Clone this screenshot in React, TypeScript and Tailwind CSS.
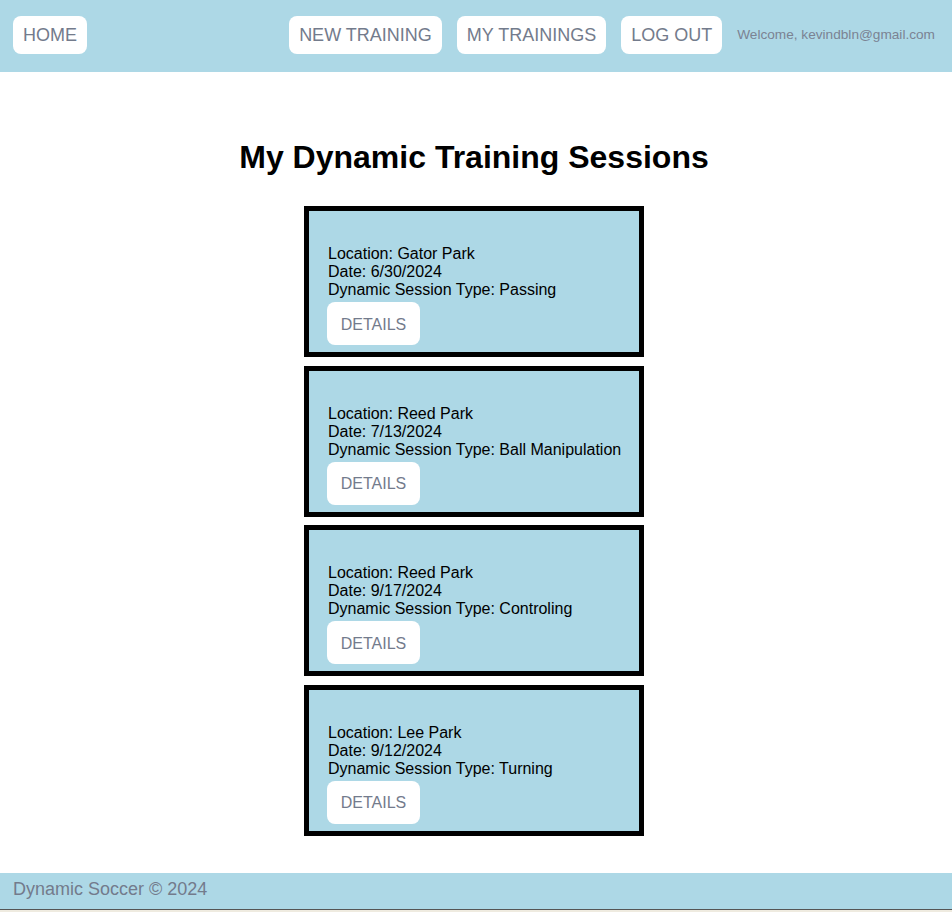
import React from "react";

const sessions = [
  { location: "Gator Park", date: "6/30/2024", type: "Passing" },
  { location: "Reed Park", date: "7/13/2024", type: "Ball Manipulation" },
  { location: "Reed Park", date: "9/17/2024", type: "Controling" },
  { location: "Lee Park", date: "9/12/2024", type: "Turning" },
];

function NavButton({ children }: { children: React.ReactNode }) {
  return (
    <button className="h-[38px] px-[10px] bg-white rounded-[8px] text-[18px] text-[#737b8c] leading-none flex items-center">
      {children}
    </button>
  );
}

export default function App() {
  return (
    <div className="min-h-[912px] bg-white flex flex-col" style={{ fontFamily: '"Liberation Sans", Arial, sans-serif' }}>
      <header className="h-[72px] bg-[#add8e6] flex items-start pt-[16px] pl-[13px] pr-[17px]">
        <NavButton>HOME</NavButton>
        <div className="flex-1" />
        <div className="flex items-center gap-[15px]">
          <NavButton>NEW TRAINING</NavButton>
          <NavButton>MY TRAININGS</NavButton>
          <NavButton>LOG OUT</NavButton>
          <span className="text-[13.65px] text-[#7b8393]">Welcome, kevindbln@gmail.com</span>
        </div>
      </header>
      <main className="flex flex-col items-center pt-[67px] pb-[37px] pr-[4px]">
        <h1 className="text-[32px] font-bold text-black leading-[37px] mb-[30px]">
          My Dynamic Training Sessions
        </h1>
        <div className="flex flex-col gap-[8.67px]">
          {sessions.map((s, i) => (
            <div
              key={i}
              className="w-[340px] h-[151px] border-[5px] border-black bg-[#add8e6] pl-[18px] pt-[34px] text-[16px] text-black leading-[18px]"
            >
              <div className="pl-[1px]">Location: {s.location}</div>
              <div className="pl-[1px]">Date: {s.date}</div>
              <div className="pl-[1px]">Dynamic Session Type: {s.type}</div>
              <button className="mt-[3px] h-[43px] w-[93px] pt-[2px] bg-white rounded-[8px] text-[16px] text-[#737b8c] leading-none">
                DETAILS
              </button>
            </div>
          ))}
        </div>
      </main>
      <footer className="h-[37px] bg-[#add8e6] border-b border-[#555] pl-[13px] pt-[6px] leading-[21px] text-[18px] text-[#737b8c]">
        Dynamic Soccer © 2024
      </footer>
      <div className="flex-1 bg-[#efebe0]" />
    </div>
  );
}
